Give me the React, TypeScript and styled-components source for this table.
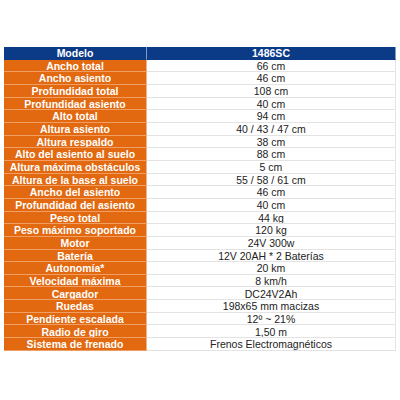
import React from "react";
import styled, { createGlobalStyle } from "styled-components";

const GlobalStyle = createGlobalStyle`
  html, body {
    margin: 0;
    padding: 0;
    background: #ffffff;
  }
`;

const Page = styled.div`
  width: 400px;
  height: 400px;
  padding: 47px 4px 0 4px;
  box-sizing: border-box;
  font-family: "Liberation Sans", Arial, sans-serif;
`;

const Table = styled.div`
  display: grid;
  grid-template-columns: 143px 249px;
  grid-auto-rows: 12.67px;
  width: 392px;
`;

const Cell = styled.div<{ $kind: "head" | "label" | "value" }>`
  display: flex;
  align-items: center;
  justify-content: center;
  box-sizing: border-box;
  padding-top: 1px;
  font-size: 10.5px;
  line-height: 1;
  white-space: nowrap;
  overflow: hidden;
  font-weight: ${(p) => (p.$kind === "value" ? 400 : 700)};
  color: ${(p) => (p.$kind === "value" ? "#222" : "#fff")};
  background: ${(p) =>
    p.$kind === "head" ? "#0b3b87" : p.$kind === "label" ? "#e2690f" : "#fff"};
  border-bottom: 1px solid
    ${(p) =>
      p.$kind === "head" ? "#0b3b87" : p.$kind === "label" ? "#ef9f63" : "#e3e3e3"};
  border-right: 1px solid
    ${(p) =>
      p.$kind === "head" ? "#7f9bc6" : p.$kind === "label" ? "#f2b382" : "#e3e3e3"};
`;

const rows: [string, string][] = [
  ["Ancho total", "66 cm"],
  ["Ancho asiento", "46 cm"],
  ["Profundidad total", "108 cm"],
  ["Profundidad asiento", "40 cm"],
  ["Alto total", "94 cm"],
  ["Altura asiento", "40 / 43 / 47 cm"],
  ["Altura respaldo", "38 cm"],
  ["Alto del asiento al suelo", "88 cm"],
  ["Altura máxima obstáculos", "5 cm"],
  ["Altura de la base al suelo", "55 / 58 / 61 cm"],
  ["Ancho del asiento", "46 cm"],
  ["Profundidad del asiento", "40 cm"],
  ["Peso total", "44 kg"],
  ["Peso máximo soportado", "120 kg"],
  ["Motor", "24V 300w"],
  ["Batería", "12V 20AH * 2 Baterías"],
  ["Autonomía*", "20 km"],
  ["Velocidad máxima", "8 km/h"],
  ["Cargador", "DC24V2Ah"],
  ["Ruedas", "198x65 mm macizas"],
  ["Pendiente escalada", "12º ~ 21%"],
  ["Radio de giro", "1,50 m"],
  ["Sistema de frenado", "Frenos Electromagnéticos"],
];

export default function App() {
  return (
    <>
      <GlobalStyle />
      <Page>
        <Table>
          <Cell $kind="head">Modelo</Cell>
          <Cell $kind="head">1486SC</Cell>
          {rows.map(([label, value]) => (
            <React.Fragment key={label}>
              <Cell $kind="label">{label}</Cell>
              <Cell $kind="value">{value}</Cell>
            </React.Fragment>
          ))}
        </Table>
      </Page>
    </>
  );
}
